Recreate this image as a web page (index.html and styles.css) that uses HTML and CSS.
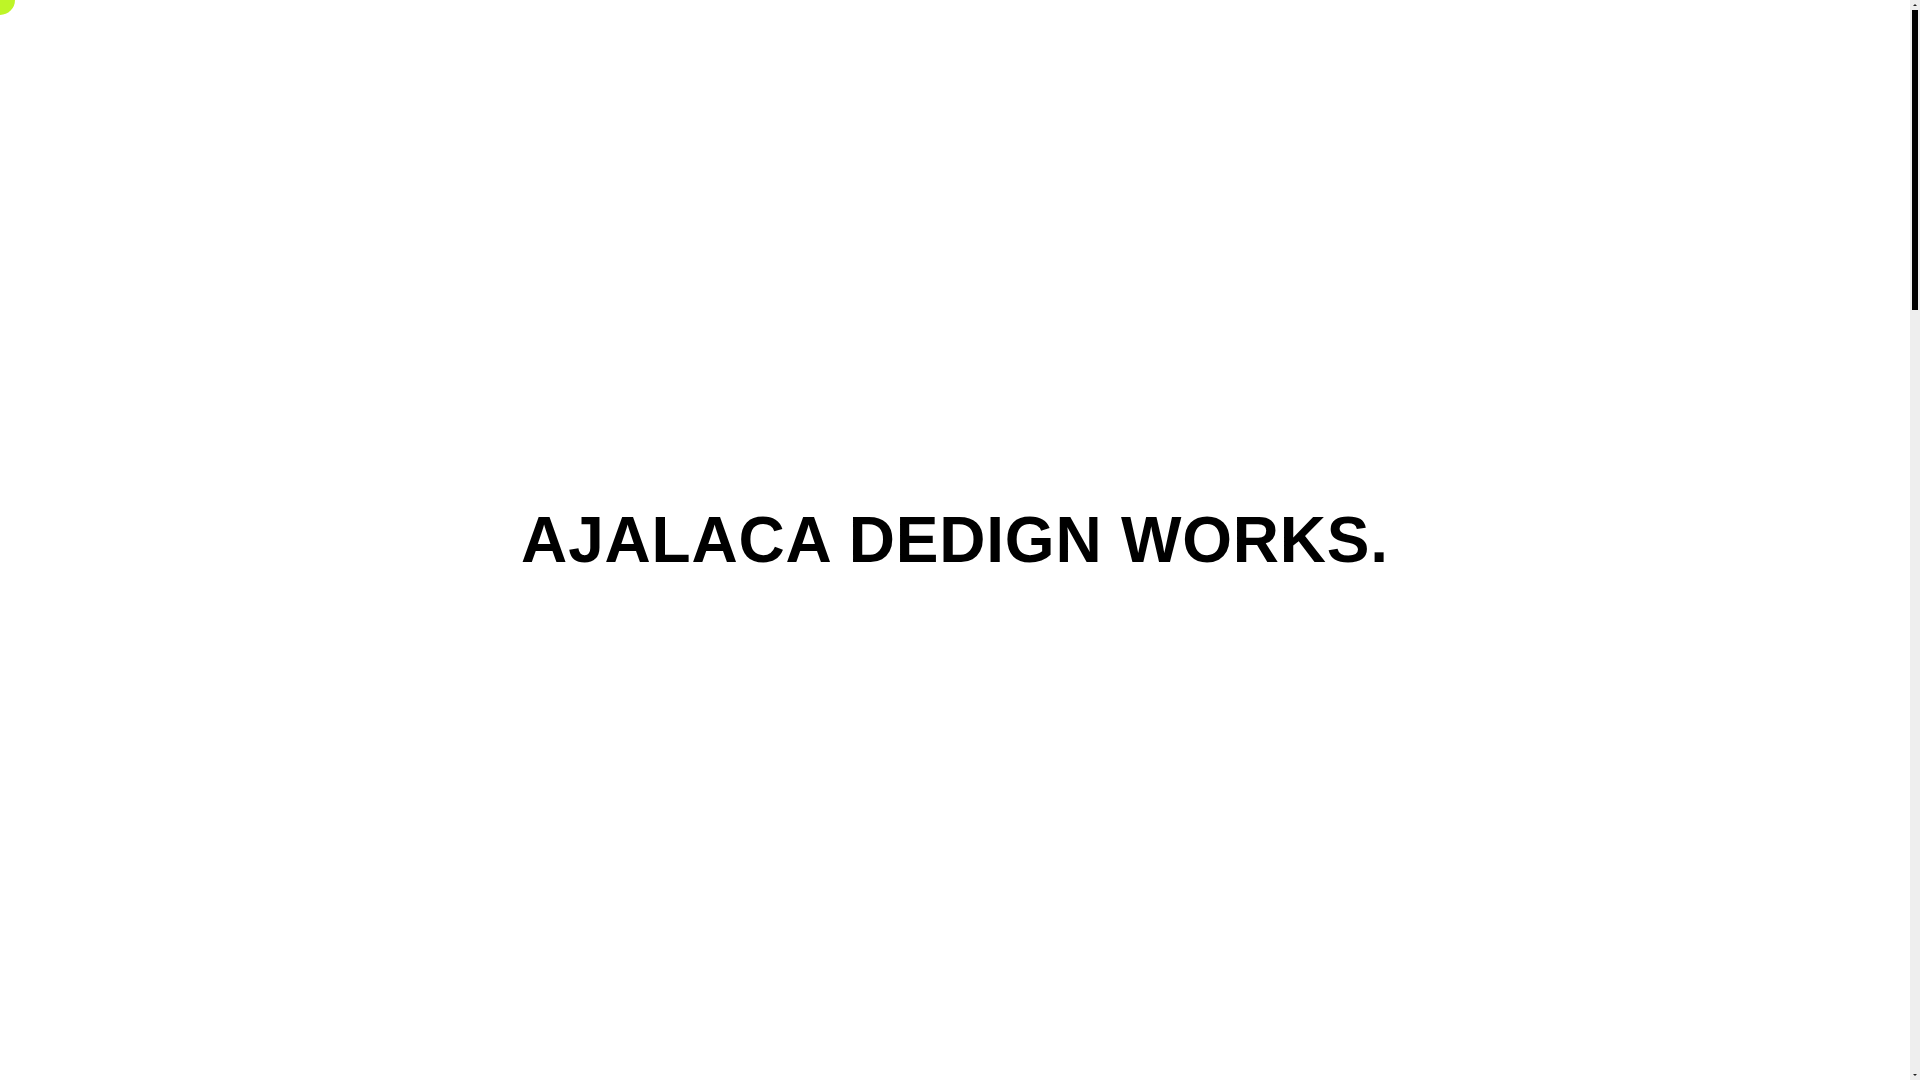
FILE: index.html
```html
<!DOCTYPE html>
<html lang="en">
<head>
<meta charset="utf-8">
<title>Ajalaca Design Works</title>
<link rel="stylesheet" href="styles.css">
</head>
<body>
<div class="cursor"></div>
<div class="scroll-track" aria-hidden="true">
  <span class="scroll-arrow scroll-arrow-up"></span>
  <span class="scroll-thumb"></span>
  <span class="scroll-arrow scroll-arrow-down"></span>
</div>
<main class="page">
  <section class="hero">
    <h1 class="hero-title">AJALACA DEDIGN WORKS.</h1>
  </section>
  <section class="rest"></section>
</main>
</body>
</html>
```

FILE: styles.css
```css
body {
  margin: 0;
  background: #fff;
  font-family: "Liberation Sans", Arial, sans-serif;
  color: #000;
}
.page {
  margin-right: 10px;
}
.cursor {
  position: fixed;
  left: 0;
  top: 0;
  width: 30px;
  height: 30px;
  border-radius: 50%;
  background: #bef527;
  transform: translate(-50%, -50%);
  pointer-events: none;
  z-index: 10;
}
.scroll-track {
  position: fixed;
  top: 0;
  right: 0;
  width: 10px;
  height: 100vh;
  background: #eee;
  display: flex;
  flex-direction: column;
  align-items: center;
  z-index: 20;
}
.scroll-arrow {
  width: 10px;
  height: 10px;
  display: flex;
  align-items: center;
  justify-content: center;
  flex: none;
}
.scroll-arrow::before {
  content: "";
  width: 0;
  height: 0;
  border-left: 2.5px solid transparent;
  border-right: 2.5px solid transparent;
}
.scroll-arrow-up::before {
  border-bottom: 2px solid #222;
}
.scroll-arrow-down {
  margin-top: auto;
}
.scroll-arrow-down::before {
  border-top: 2px solid #222;
}
.scroll-thumb {
  width: 6px;
  height: 300px;
  background: #000;
  flex: none;
}
.hero {
  height: 100vh;
  display: flex;
  align-items: center;
  justify-content: center;
}
.hero-title {
  margin: 0;
  font-size: 64px;
  font-weight: 700;
  line-height: normal;
  letter-spacing: 0.8px;
}
.rest {
  height: 2736px;
}
```
